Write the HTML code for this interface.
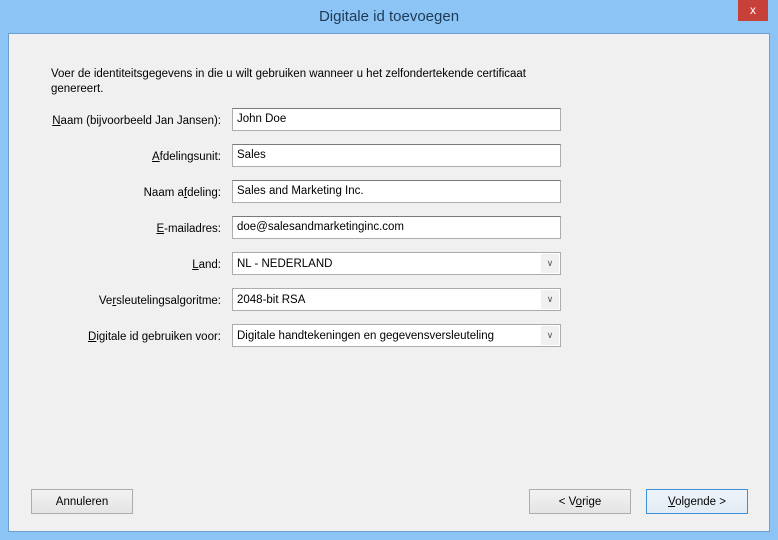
<!DOCTYPE html>
<html><head><meta charset="utf-8"><style>
body{margin:0;width:778px;height:540px;background:#8cc4f6;font-family:"Liberation Sans",sans-serif;font-size:11.5px;color:#000;position:relative;overflow:hidden}
.title{position:absolute;top:0;left:0;width:778px;height:34px;line-height:34px;text-align:center;font-size:15px;color:#1e3a55}
.close{position:absolute;left:738px;top:0;width:30px;height:21px;background:#c7403a;color:#fff;text-align:center;line-height:20px;font-size:12px}
.content{position:absolute;left:8px;top:33px;width:762px;height:499px;background:#f0f0f0;border:1px solid #6d9fcc;box-sizing:border-box}
.abs{position:absolute}
.lbl{position:absolute;right:557px;text-align:right;white-space:nowrap}
.inp{position:absolute;left:232px;width:329px;height:23px;box-sizing:border-box;background:#fff;border:1px solid #acacac;border-top-color:#7a7a7a;padding:4px 0 0 4px;white-space:nowrap}
.sel{border:1px solid #acacac;padding-top:5px}
.arr{position:absolute;right:1px;top:1px;width:18px;height:19px;background:#f0f0f0;color:#555;text-align:center;font-size:9px;line-height:19px}
.btn{position:absolute;top:489px;width:102px;height:25px;box-sizing:border-box;border:1px solid #adadad;background:linear-gradient(#f2f2f2,#e4e4e4);text-align:center;line-height:24px}
u{text-decoration:underline}
</style></head><body>
<div class="title">Digitale id toevoegen</div>
<div class="close">x</div>
<div class="content"></div>
<div class="abs" style="left:51px;top:67px;line-height:15px;width:520px">Voer de identiteitsgegevens in die u wilt gebruiken wanneer u het zelfondertekende certificaat genereert.</div>

<div class="lbl" style="top:115px"><u>N</u>aam (bijvoorbeeld Jan Jansen):</div>
<div class="inp" style="top:108px">John Doe</div>
<div class="lbl" style="top:151px"><u>A</u>fdelingsunit:</div>
<div class="inp" style="top:144px">Sales</div>
<div class="lbl" style="top:187px">Naam a<u>f</u>deling:</div>
<div class="inp" style="top:180px">Sales and Marketing Inc.</div>
<div class="lbl" style="top:223px"><u>E</u>-mailadres:</div>
<div class="inp" style="top:216px">doe@salesandmarketinginc.com</div>
<div class="lbl" style="top:259px"><u>L</u>and:</div>
<div class="inp sel" style="top:252px">NL - NEDERLAND<div class="arr">&#8744;</div></div>
<div class="lbl" style="top:295px">Ve<u>r</u>sleutelingsalgoritme:</div>
<div class="inp sel" style="top:288px">2048-bit RSA<div class="arr">&#8744;</div></div>
<div class="lbl" style="top:331px"><u>D</u>igitale id gebruiken voor:</div>
<div class="inp sel" style="top:324px">Digitale handtekeningen en gegevensversleuteling<div class="arr">&#8744;</div></div>

<div class="btn" style="left:31px">Annuleren</div>
<div class="btn" style="left:529px">&lt; V<u>o</u>rige</div>
<div class="btn" style="left:646px;border-color:#3c8fd9;background:linear-gradient(#eef4fa,#e2ebf4)"><u>V</u>olgende &gt;</div>
</body></html>
